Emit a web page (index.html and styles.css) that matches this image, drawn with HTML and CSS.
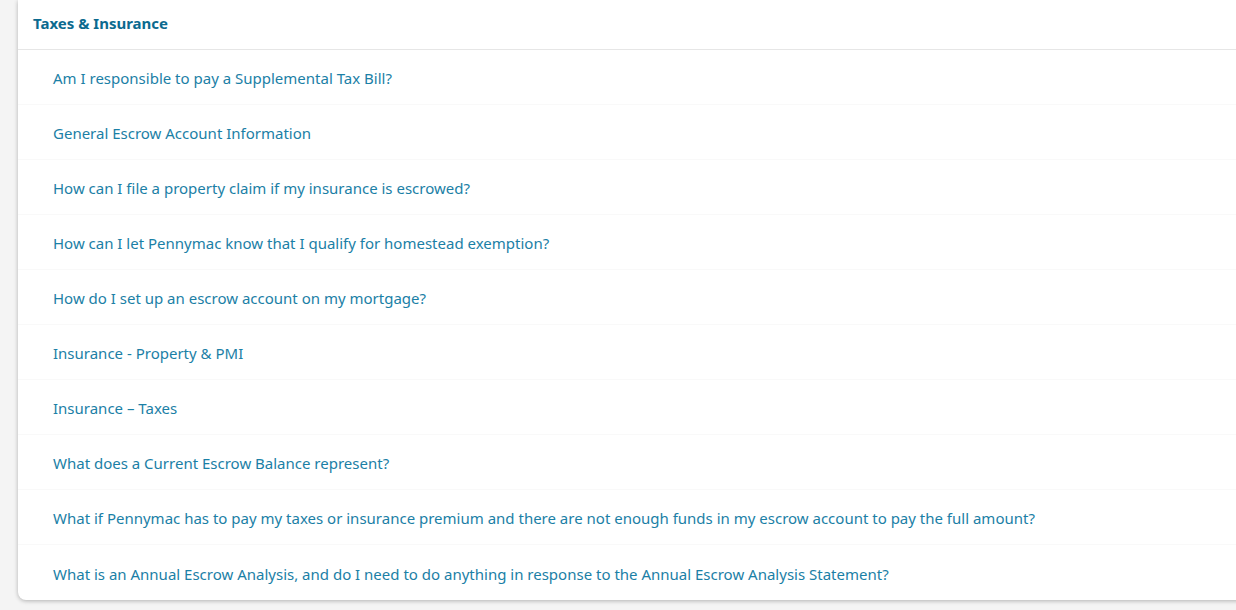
FILE: index.html
```html
<!DOCTYPE html>
<html>
<head>
<meta charset="utf-8">
<link rel="stylesheet" href="styles.css">
</head>
<body>
<div class="page">
  <section class="card">
    <header class="card-head">Taxes &amp; Insurance</header>
    <ul class="faq">
      <li class="faq-item"><a class="faq-link">Am I responsible to pay a Supplemental Tax Bill?</a></li>
      <li class="faq-item"><a class="faq-link">General Escrow Account Information</a></li>
      <li class="faq-item"><a class="faq-link">How can I file a property claim if my insurance is escrowed?</a></li>
      <li class="faq-item"><a class="faq-link">How can I let Pennymac know that I qualify for homestead exemption?</a></li>
      <li class="faq-item"><a class="faq-link">How do I set up an escrow account on my mortgage?</a></li>
      <li class="faq-item"><a class="faq-link">Insurance - Property &amp; PMI</a></li>
      <li class="faq-item"><a class="faq-link">Insurance – Taxes</a></li>
      <li class="faq-item"><a class="faq-link">What does a Current Escrow Balance represent?</a></li>
      <li class="faq-item"><a class="faq-link">What if Pennymac has to pay my taxes or insurance premium and there are not enough funds in my escrow account to pay the full amount?</a></li>
      <li class="faq-item"><a class="faq-link">What is an Annual Escrow Analysis, and do I need to do anything in response to the Annual Escrow Analysis Statement?</a></li>
    </ul>
  </section>
</div>
</body>
</html>
```

FILE: styles.css
```css
html, body {
  margin: 0;
  padding: 0;
  background: #f4f4f4;
  font-family: "Noto Sans", "Open Sans", sans-serif;
  overflow: hidden;
}
.page {
  width: 1236px;
  height: 610px;
  padding-left: 18px;
  box-sizing: border-box;
}
.card {
  width: 1240px;
  height: 600px;
  background: #fff;
  border-radius: 0 0 8px 8px;
  box-shadow: 0 1px 4px rgba(0,0,0,0.28);
  overflow: hidden;
}
.card-head {
  height: 50px;
  box-sizing: border-box;
  border-bottom: 1px solid #e6e6e6;
  display: flex;
  align-items: center;
  padding-left: 15px;
  padding-bottom: 3px;
  font-size: 15px;
  font-weight: 700;
  color: #0b6a8f;
}
.faq {
  list-style: none;
  margin: 0;
  padding: 0;
}
.faq-item {
  height: 55px;
  box-sizing: border-box;
  display: flex;
  align-items: center;
  padding-left: 35px;
  border-bottom: 1px solid #f9f9f9;
}
.faq-item:last-child {
  border-bottom: none;
}
.faq-link {
  font-size: 15px;
  color: #1b80a6;
  cursor: pointer;
  position: relative;
  top: 1px;
}
```
